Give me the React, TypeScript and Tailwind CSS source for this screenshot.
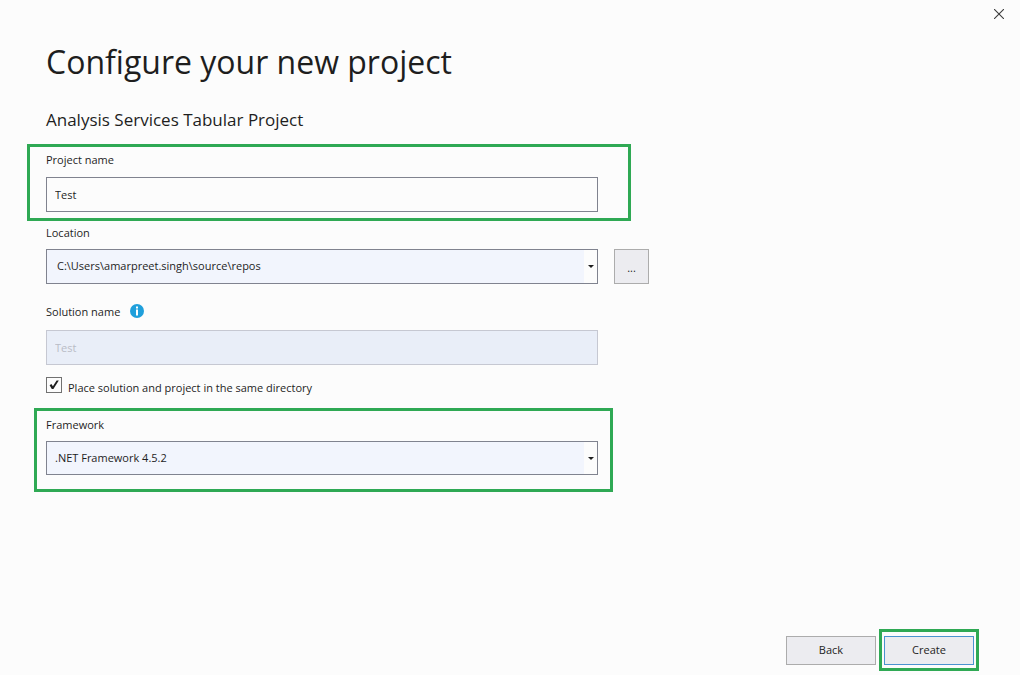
import React, { useState } from "react";

const labelClass = "block text-[11px] leading-4 text-[#1e1e1e]";

function Highlight({ className, children }: { className: string; children: React.ReactNode }) {
  return <div className={`border-[3px] border-[#2fa954] ${className}`}>{children}</div>;
}

function Dropdown({ id, options, className }: { id: string; options: string[]; className: string }) {
  return (
    <div className="relative w-full max-w-[552px]">
      <select
        id={id}
        className={`block w-full appearance-none rounded-none border border-[#80838f] bg-[#f2f5fd] pr-5 text-[11px] text-[#1e1e1e] outline-none ${className}`}
      >
        {options.map((option) => (
          <option key={option}>{option}</option>
        ))}
      </select>
      <span className="pointer-events-none absolute inset-y-px right-px flex w-[13px] items-center justify-center bg-[#fcfcfc]">
        <svg width="6" height="3" viewBox="0 0 6 3" aria-hidden="true">
          <path d="M0 0h6L3 3z" fill="#1e1e1e" />
        </svg>
      </span>
    </div>
  );
}

export default function App() {
  const [name, setName] = useState("Test");
  const [sameDirectory, setSameDirectory] = useState(true);

  return (
    <div className="flex min-h-screen flex-col bg-[#fcfcfc] font-['Open_Sans','Noto_Sans',sans-serif] text-[11px] text-[#1e1e1e]">
      <header className="flex justify-end pt-1 pr-[11px]">
        <button type="button" aria-label="Close" className="flex size-5 items-center justify-center">
          <svg width="10" height="10" viewBox="0 0 10 10" fill="none" stroke="#3c3c3c" strokeWidth="1.1" aria-hidden="true">
            <path d="M0 0l10 10M10 0L0 10" />
          </svg>
        </button>
      </header>

      <form className="flex grow flex-col" onSubmit={(event) => event.preventDefault()}>
        <main className="flex flex-col px-[27px] pt-4">
          <h1 className="pl-[19px] text-[32px] leading-[44px]">Configure your new project</h1>
          <h2 className="mt-6 pl-[19px] text-[17px] leading-6">Analysis Services Tabular Project</h2>

          <Highlight className="mt-3 w-full max-w-[604px] pt-[5px] pr-[30px] pb-[6px] pl-4">
            <label htmlFor="project-name" className={labelClass}>Project name</label>
            <input
              id="project-name"
              type="text"
              value={name}
              onChange={(event) => setName(event.target.value)}
              className="mt-[9px] block h-[35px] w-full border border-[#80838f] bg-[#fcfcfc] px-2 text-[11px] outline-none"
            />
          </Highlight>

          <div className="mt-1 pl-[19px]">
            <label htmlFor="location" className={labelClass}>Location</label>
            <div className="mt-2 flex gap-4">
              <Dropdown id="location" options={["C:\\Users\\amarpreet.singh\\source\\repos"]} className="h-[35px] pl-[10px]" />
              <button
                type="button"
                aria-label="Browse"
                className="size-[35px] shrink-0 border border-[#acacac] bg-[#ececf0] pt-1 text-[11px]"
              >
                ...
              </button>
            </div>
          </div>

          <div className="mt-5 pl-[19px]">
            <div className="flex items-start gap-[10px]">
              <label htmlFor="solution-name" className={labelClass}>Solution name</label>
              <svg width="14" height="14" viewBox="0 0 14 14" role="img" aria-label="Information">
                <circle cx="7" cy="7" r="7" fill="#1f9fdb" />
                <path d="M6 2.6h2v2H6zM6 5.6h2v5.8H6z" fill="#fff" />
              </svg>
            </div>
            <input
              id="solution-name"
              type="text"
              value={name}
              disabled
              className="mt-[10px] block h-[35px] w-full max-w-[552px] border border-[#c6c8d2] bg-[#e9eef8] px-2 text-[11px] text-[#b9bcc6]"
            />
            <div className="mt-3 flex gap-[6px]">
              <span className="relative size-4">
                <input
                  id="same-directory"
                  type="checkbox"
                  checked={sameDirectory}
                  onChange={(event) => setSameDirectory(event.target.checked)}
                  className="block size-4 appearance-none border border-[#717171] bg-[#fcfcfc]"
                />
                {sameDirectory && (
                  <svg className="pointer-events-none absolute inset-0" width="16" height="16" viewBox="0 0 16 16" aria-hidden="true">
                    <path d="M3.6 8.2L5.4 7.1 6.9 9.2 10.6 3.6 12.8 3.6 7.4 12 5.8 12z" fill="#1e1e1e" />
                  </svg>
                )}
              </span>
              <label htmlFor="same-directory" className="pt-[3px] leading-4">
                Place solution and project in the same directory
              </label>
            </div>
          </div>

          <Highlight className="mt-3 ml-[7px] w-full max-w-[579px] pt-[6px] pr-3 pb-[14px] pl-[9px]">
            <label htmlFor="framework" className={`mb-2 ${labelClass}`}>Framework</label>
            <Dropdown id="framework" options={[".NET Framework 4.5.2"]} className="h-[34px] pl-2" />
          </Highlight>
        </main>

        <footer className="mt-auto flex items-start justify-end gap-[3px] pr-[41px] pb-1">
          <button type="button" className="mt-[7px] h-[29px] w-[90px] border border-[#acacac] bg-[#ececf0]">Back</button>
          <Highlight className="px-[2px] pt-1 pb-[3px]">
            <button type="submit" className="block h-[29px] w-[90px] border border-[#4a93cf] bg-[#ececf0]">Create</button>
          </Highlight>
        </footer>
      </form>
    </div>
  );
}
